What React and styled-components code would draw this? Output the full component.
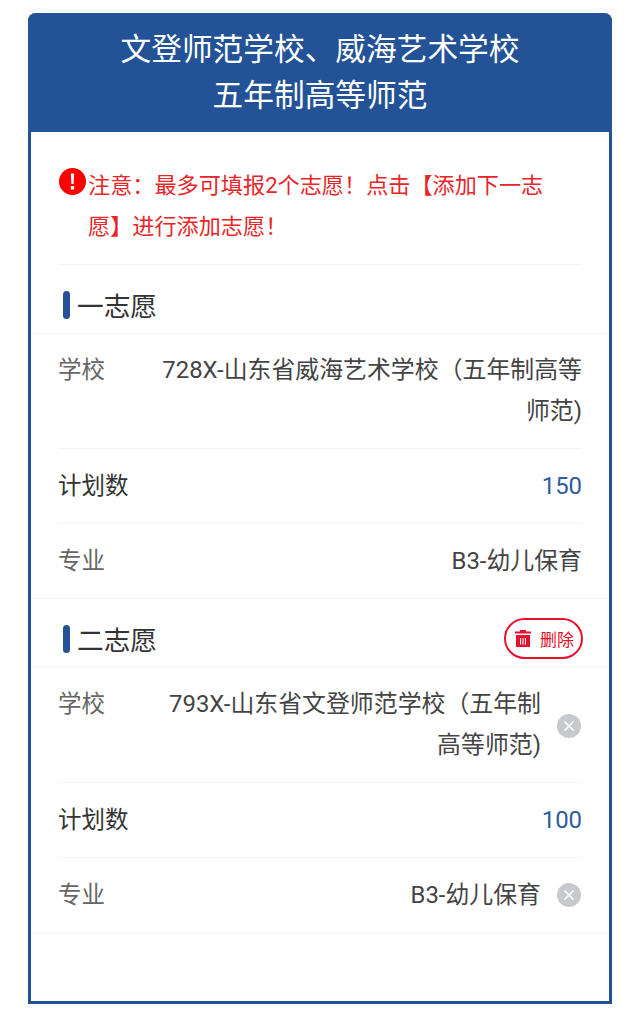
import React from "react"
import styled, { createGlobalStyle } from "styled-components"

const blue = "#235396"

const GlobalStyle = createGlobalStyle`
  html, body {
    margin: 0;
    background: #fff;
    font-family: Roboto, "Noto Sans CJK SC", sans-serif;
  }
`

const Page = styled.div`
  padding: 13px 28px 22px;
`

const Card = styled.div`
  box-sizing: border-box;
  height: 991px;
  border: 3px solid ${blue};
  border-top: 0;
  border-radius: 8px 8px 0 0;
`

const Header = styled.h1`
  margin: 0 -3px;
  height: 119px;
  padding-top: 14px;
  box-sizing: border-box;
  border-radius: 8px 8px 0 0;
  background: ${blue};
  color: #fff;
  font-size: 30.7px;
  font-weight: 400;
  line-height: 46px;
  text-align: center;
`

const Notice = styled.div`
  display: flex;
  margin: 0 27px;
  padding: 33px 0 17px 1px;
  height: 133px;
  box-sizing: border-box;
  border-bottom: 1px solid #f3f3f3;
`

const NoticeIcon = styled.svg`
  flex: none;
  width: 27px;
  height: 27px;
  margin: 3px 2px 0 0;
`

const NoticeText = styled.p`
  margin: 0;
  width: 460px;
  color: #e8262a;
  font-size: 22.15px;
  line-height: 41px;
`

const SectionHead = styled.div`
  display: flex;
  align-items: center;
  height: 69px;
  padding: 11px 26px 0 32px;
  border-bottom: 1px solid #f3f3f3;
  box-sizing: border-box;
`

const Bar = styled.span`
  width: 7px;
  height: 28px;
  margin-right: 7px;
  border-radius: 4px;
  background: ${blue};
`

const SectionTitle = styled.h2`
  flex: 1;
  margin: 0;
  color: #333;
  font-size: 26.7px;
  font-weight: 400;
`

const DeleteButton = styled.button`
  display: flex;
  align-items: center;
  gap: 9px;
  height: 41px;
  padding: 0 7px 0 9px;
  border: 2px solid #e8112d;
  border-radius: 21px;
  background: #fff;
  color: #e8112d;
  font: inherit;
  font-size: 17px;
`

const Rows = styled.div`
  border-bottom: 1px solid #f3f3f3;
`

const Row = styled.div`
  display: flex;
  align-items: ${p => (p.$top ? "flex-start" : "center")};
  margin: 0 27px;
  height: ${p => (p.$top ? 115 : p.$last ? 74 : 75)}px;
  box-sizing: border-box;
  padding: ${p => (p.$top ? "16px 0 0" : "0")};
  border-bottom: ${p => (p.$last ? "0" : "1px solid #f3f3f3")};
`

const Label = styled.span`
  flex: none;
  width: 90px;
  color: ${p => (p.$dark ? "#333" : "#666")};
  font-size: 23.5px;
  line-height: 41px;
`

const Value = styled.span`
  flex: 1;
  color: ${p => (p.$blue ? "#2f5c9e" : "#444")};
  font-size: 23.9px;
  line-height: 41px;
  text-align: right;
`

const Clear = styled.svg`
  flex: none;
  align-self: center;
  width: 24px;
  height: 24px;
  margin: ${p => (p.$raise ? "-14px" : "0")} 1px 0 16px;
`

const TrashIcon = () => (
  <svg width="16" height="17" viewBox="0 0 16 17">
    <path fill="#e8112d" fillRule="evenodd" d="M5 0h6v1.5h5v2H0v-2h5zM1 5h14v12H1zM5 8v6.5h1.1V8zm2.45 0v6.5h1.1V8zm2.45 0v6.5H11V8z" />
  </svg>
)

const ClearIcon = ({ raise }) => (
  <Clear viewBox="0 0 24 24" $raise={raise}>
    <circle cx="12" cy="12" r="12" fill="#c8c9cc" />
    <path d="M7.5 7.5l9 9M16.5 7.5l-9 9" stroke="#fff" strokeWidth="1.7" />
  </Clear>
)

const Choice = ({ title, school, plan, major, removable }) => (
  <section>
    <SectionHead>
      <Bar />
      <SectionTitle>{title}</SectionTitle>
      {removable && (
        <DeleteButton>
          <TrashIcon />
          删除
        </DeleteButton>
      )}
    </SectionHead>
    <Rows>
      <Row $top>
        <Label>学校</Label>
        <Value>{school}</Value>
        {removable && <ClearIcon raise />}
      </Row>
      <Row>
        <Label $dark>计划数</Label>
        <Value $blue>{plan}</Value>
      </Row>
      <Row $last>
        <Label>专业</Label>
        <Value>{major}</Value>
        {removable && <ClearIcon />}
      </Row>
    </Rows>
  </section>
)

export default function App() {
  return (
    <Page>
      <GlobalStyle />
      <Card>
        <Header>
          文登师范学校、威海艺术学校
          <br />
          五年制高等师范
        </Header>
        <Notice>
          <NoticeIcon viewBox="0 0 27 27">
            <circle cx="13.5" cy="13.5" r="13.5" fill="#f00" />
            <path d="M11.8 5.5h3.4l-.6 10.5h-2.2zM11.8 18h3.4v3.4h-3.4z" fill="#fff" />
          </NoticeIcon>
          <NoticeText>注意：最多可填报2个志愿！点击【添加下一志愿】进行添加志愿！</NoticeText>
        </Notice>
        <Choice
          title="一志愿"
          school="728X-山东省威海艺术学校（五年制高等师范)"
          plan="150"
          major="B3-幼儿保育"
        />
        <Choice
          title="二志愿"
          school="793X-山东省文登师范学校（五年制高等师范)"
          plan="100"
          major="B3-幼儿保育"
          removable
        />
      </Card>
    </Page>
  )
}
